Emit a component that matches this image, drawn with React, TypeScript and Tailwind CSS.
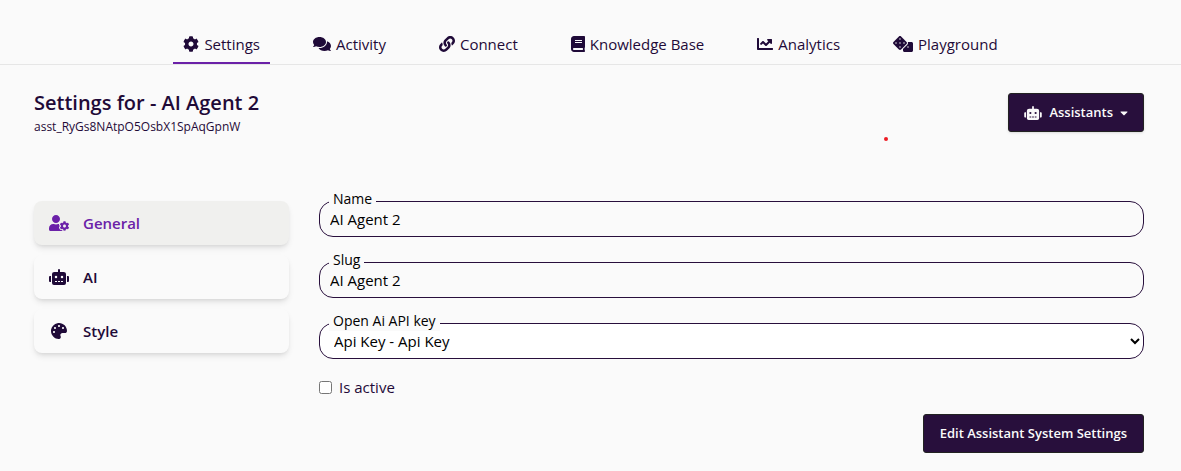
import React, { useState } from 'react';
import {
  FaBook,
  FaCaretDown,
  FaChartLine,
  FaCog,
  FaComments,
  FaDice,
  FaLink,
  FaPalette,
  FaRobot,
  FaUserCog,
} from 'react-icons/fa';
import type { IconType } from 'react-icons';

interface NavItem {
  label: string;
  icon: IconType;
  size: string;
}

const tabs: NavItem[] = [
  { label: 'Settings', icon: FaCog, size: 'w-4' },
  { label: 'Activity', icon: FaComments, size: 'w-[18px]' },
  { label: 'Connect', icon: FaLink, size: 'w-4' },
  { label: 'Knowledge Base', icon: FaBook, size: 'w-[14px]' },
  { label: 'Analytics', icon: FaChartLine, size: 'w-4' },
  { label: 'Playground', icon: FaDice, size: 'w-5' },
];

const sections: NavItem[] = [
  { label: 'General', icon: FaUserCog, size: 'w-5' },
  { label: 'AI', icon: FaRobot, size: 'w-5' },
  { label: 'Style', icon: FaPalette, size: 'w-4' },
];

interface FieldProps {
  id: string;
  label: string;
  children: React.ReactNode;
}

const Field: React.FC<FieldProps> = ({ id, label, children }) => {
  return (
    <div className="relative">
      <label
        htmlFor={id}
        className="absolute -top-3 left-[10px] bg-[#fafafa] px-1 text-sm leading-5 text-black"
      >
        {label}
      </label>
      {children}
    </div>
  );
};

const App: React.FC = () => {
  const [section, setSection] = useState('General');
  const [name, setName] = useState('AI Agent 2');
  const [slug, setSlug] = useState('AI Agent 2');
  const [active, setActive] = useState(false);

  return (
    <div className="min-h-screen bg-[#fafafa] font-['Open_Sans','Noto_Sans',sans-serif] text-[#1f0a38]">
      <nav className="flex justify-center gap-[33px] border-b border-[#e6e6e6] pt-[26px]">
        {tabs.map(({ label, icon: Icon, size }, index) => (
          <a
            key={label}
            href="#"
            className={`flex h-[38px] items-center gap-[5px] border-b-2 px-[10px] text-[15px] ${
              index === 0 ? 'border-[#6b21a8]' : 'border-transparent'
            }`}
          >
            <Icon className={`h-4 shrink-0 ${size}`} />
            {label}
          </a>
        ))}
      </nav>

      <div className="pr-[37px] pl-[34px]">
        <header className="relative flex items-start justify-between pt-7">
          <div>
            <h1 className="text-xl leading-5 font-semibold">Settings for - AI Agent 2</h1>
            <p className="mt-1 text-xs leading-5">asst_RyGs8NAtpO5OsbX1SpAqGpnW</p>
          </div>
          <span className="absolute right-[256px] -bottom-1 h-1 w-1 rounded-full bg-[#ed1c24]" />
          <button
            type="button"
            className="flex h-[39px] items-center gap-[7px] rounded-[3px] border border-[#222] bg-[#280f3c] px-[15px] text-[13px] font-semibold text-[#fafafa] shadow"
          >
            <FaRobot className="h-[14px] w-[18px]" />
            Assistants
            <FaCaretDown className="h-3 w-2" />
          </button>
        </header>

        <div className="mt-16 flex gap-[30px]">
          <aside className="flex w-[255px] shrink-0 flex-col gap-[10px]">
            {sections.map(({ label, icon: Icon, size }) => (
              <button
                key={label}
                type="button"
                onClick={() => setSection(label)}
                className={`flex h-11 items-center gap-[14px] rounded-lg px-[14px] text-[15px] font-semibold shadow-md ${
                  section === label ? 'bg-[#f0f0ee] text-[#6b21a8]' : 'bg-[#fafafa]'
                }`}
              >
                <span className="flex w-[21px] justify-center">
                  <Icon className={`h-4 shrink-0 ${size}`} />
                </span>
                {label}
              </button>
            ))}
          </aside>

          <main className="flex min-w-0 flex-1 flex-col text-[15px]">
            <div className="flex flex-col gap-[25px]">
              <Field id="name" label="Name">
                <input
                  id="name"
                  value={name}
                  onChange={(e) => setName(e.target.value)}
                  className="block h-9 w-full rounded-[14px] border border-[#280f3c] px-[10px] text-black"
                />
              </Field>
              <Field id="slug" label="Slug">
                <input
                  id="slug"
                  value={slug}
                  onChange={(e) => setSlug(e.target.value)}
                  className="block h-9 w-full rounded-[14px] border border-[#280f3c] px-[10px] text-black"
                />
              </Field>
              <Field id="api-key" label="Open Ai API key">
                <select
                  id="api-key"
                  className="block h-9 w-full rounded-[14px] border border-[#280f3c] bg-white pl-[10px] text-black"
                >
                  <option>Api Key - Api Key</option>
                </select>
              </Field>
            </div>
            <div className="mt-[18px] flex items-center gap-[7px]">
              <input
                id="is-active"
                type="checkbox"
                checked={active}
                onChange={(e) => setActive(e.target.checked)}
                className="h-[13px] w-[13px]"
              />
              <label htmlFor="is-active" className="leading-5">
                Is active
              </label>
            </div>
            <button
              type="button"
              className="mt-[17px] h-[39px] self-end rounded-[3px] border border-[#222] bg-[#280f3c] px-4 text-[13px] font-semibold text-[#fafafa]"
            >
              Edit Assistant System Settings
            </button>
          </main>
        </div>
      </div>
    </div>
  );
};

export default App;
